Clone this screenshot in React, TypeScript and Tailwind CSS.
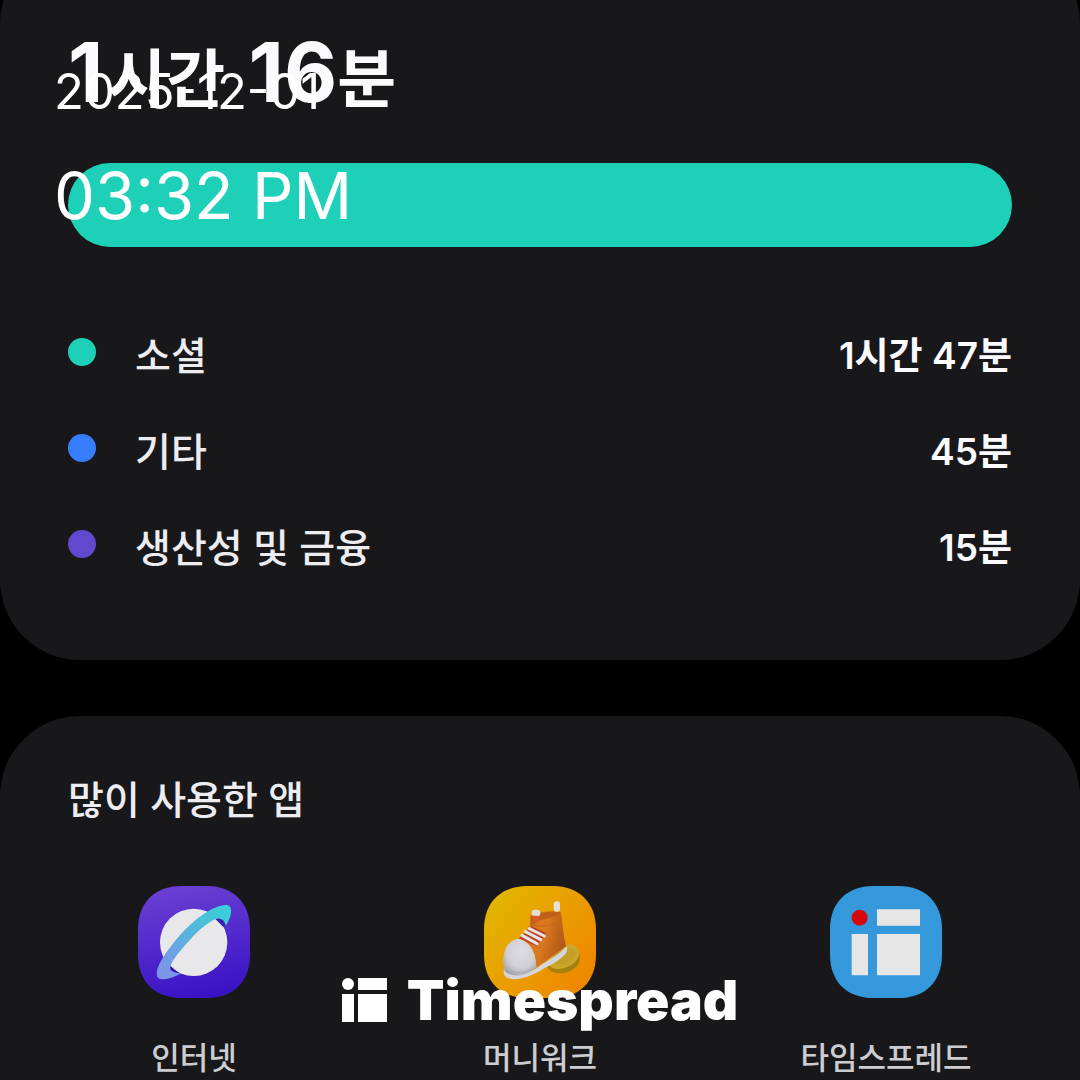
import React from "react";

const SQUIRCLE =
  "M130 0H206C286 0 336 50 336 130V206C336 286 286 336 206 336H130C50 336 0 286 0 206V130C0 50 50 0 130 0Z";

const categories = [
  { name: "소셜", time: "1시간 47분", dot: "bg-[#1fd0b8]" },
  { name: "기타", time: "45분", dot: "bg-[#387dff]" },
  { name: "생산성 및 금융", time: "15분", dot: "bg-[#6049cf]" },
];

function InternetIcon() {
  return (
    <svg viewBox="0 0 336 336" className="size-28" aria-hidden="true">
      <defs>
        <linearGradient id="net-bg" x1="0.4" y1="0" x2="0.6" y2="1">
          <stop offset="0" stopColor="#6a3fd3" />
          <stop offset="1" stopColor="#3912c4" />
        </linearGradient>
        <linearGradient id="net-ring" x1="1" y1="0" x2="0" y2="1">
          <stop offset="0" stopColor="#35d3d8" />
          <stop offset="0.5" stopColor="#5cb2dd" />
          <stop offset="1" stopColor="#818fec" />
        </linearGradient>
      </defs>
      <path d={SQUIRCLE} fill="url(#net-bg)" />
      <circle cx="167" cy="169" r="101" fill="#e8e8ea" />
      <path d="M232 99C244 92 256 98 260 113L263 119L255 122Z" fill="#3a1fae" />
      <path d="M97 239C92 249 95 258 107 262L123 262Z" fill="#3a16ac" />
      <path
        d="M262 57C284 55 286 84 263 120C262 108 254 96 236 98C212 107 184 130 159 158C127 193 102 221 97 242C94 254 106 260 130 262C98 280 68 286 58 273C50 256 66 222 104 174C143 122 213 60 262 57Z"
        fill="url(#net-ring)"
      />
    </svg>
  );
}

function ShoeIcon() {
  return (
    <svg viewBox="0 0 336 336" className="size-28" aria-hidden="true">
      <defs>
        <linearGradient id="shoe-bg" x1="0" y1="0.1" x2="1" y2="0.9">
          <stop offset="0" stopColor="#e2b800" />
          <stop offset="1" stopColor="#f08300" />
        </linearGradient>
        <linearGradient id="shoe-body" x1="0" y1="0" x2="1" y2="0.3">
          <stop offset="0" stopColor="#dc7f22" />
          <stop offset="0.6" stopColor="#d9781c" />
          <stop offset="1" stopColor="#b4591a" />
        </linearGradient>
        <radialGradient id="shoe-toe" cx="0.55" cy="0.35" r="0.75">
          <stop offset="0" stopColor="#dedee2" />
          <stop offset="0.6" stopColor="#cfcfd4" />
          <stop offset="1" stopColor="#9a9aa0" />
        </radialGradient>
        <linearGradient id="shoe-coin" x1="0" y1="0" x2="1" y2="1">
          <stop offset="0" stopColor="#d2aa2a" />
          <stop offset="1" stopColor="#c9a42a" />
        </linearGradient>
      </defs>
      <path d={SQUIRCLE} fill="url(#shoe-bg)" />
      <path d="M188 238C196 264 232 268 260 254C286 242 292 222 286 204L188 226Z" fill="#a5820f" />
      <ellipse cx="238" cy="212" rx="51" ry="33" transform="rotate(-24 238 212)" fill="url(#shoe-coin)" />
      <ellipse cx="240" cy="211" rx="36" ry="21" transform="rotate(-24 240 211)" fill="#c49f25" />
      <path d="M139 91C154 78 205 72 230 79C237 108 236 147 247 180L160 243L105 160C125 143 140 122 139 91Z" fill="url(#shoe-body)" />
      <path d="M139 91C158 79 210 74 230 79C222 93 184 98 163 106L141 123Z" fill="#bf6019" />
      <path d="M141 113C158 125 197 122 233 105" fill="none" stroke="#c46a18" strokeWidth="4" />
      <path d="M104 158L143 121L186 141L158 180Z" fill="#b83e25" />
      <path d="M114 148L159 173M124 137L170 161M136 128L181 150" stroke="#e9e4e2" strokeWidth="9" strokeLinecap="round" />
      <path d="M62 242C86 267 138 264 164 242C194 222 229 205 247 181C251 189 250 197 244 205C220 230 197 237 171 253C138 273 89 290 65 272C58 264 57 253 62 242Z" fill="#d6d6da" />
      <path d="M103 158C134 162 159 200 156 244C132 272 80 276 62 255C50 210 64 164 103 158Z" fill="url(#shoe-toe)" />
      <path d="M61 241C69 262 116 268 154 245" fill="none" stroke="#a9a9af" strokeWidth="3" />
      <rect x="209" y="46" width="19" height="31" rx="9" fill="#e8dfd8" />
      <rect x="143" y="71" width="26" height="20" rx="9" fill="#e5ded8" />
      <path d="M147 89L167 90L164 106L148 109Z" fill="#d65b29" />
    </svg>
  );
}

function TimespreadIcon() {
  return (
    <svg viewBox="0 0 336 336" className="size-28" aria-hidden="true">
      <path d={SQUIRCLE} fill="#3498db" />
      <circle cx="89" cy="95" r="24" fill="#d50707" />
      <path d="M141 70H270V119H141ZM65 144H114V268H65ZM141 144H270V268H141Z" fill="#e6e6e6" />
    </svg>
  );
}

const apps = [
  { name: "인터넷", Icon: InternetIcon },
  { name: "머니워크", Icon: ShoeIcon },
  { name: "타임스프레드", Icon: TimespreadIcon },
];

function Stamp() {
  return (
    <div className="absolute top-0 left-[54px] text-white">
      <p className="mt-16 text-[49px] leading-[56px]">2025-12-01</p>
      <p className="mt-9 text-[65px] leading-[80px]">03:32 PM</p>
    </div>
  );
}

function Brand() {
  return (
    <div className="absolute inset-x-0 top-[968px] flex items-center justify-center gap-5 text-white">
      <svg viewBox="0 0 45 44" className="h-11 w-[45px]" aria-hidden="true">
        <circle cx="6" cy="6" r="6" fill="currentColor" />
        <path d="M16 0H45V12H16ZM0 16H12V44H0ZM16 16H45V44H16Z" fill="currentColor" />
      </svg>
      <span className="text-[55px] leading-[64px] font-black">Timespread</span>
    </div>
  );
}

export default function App() {
  return (
    <main className="relative flex h-screen flex-col gap-14 overflow-hidden bg-black font-['Inter','Noto_Sans_CJK_KR',sans-serif] text-[#ececf1]">
      <section className="-mt-14 shrink-0 rounded-[80px] bg-[#18181a] px-[68px] pt-20 pb-[68px]">
        <h1 className="text-[82px] leading-[98px] font-bold text-[#fafaff]">
          1<span className="mx-1 text-[64px]">시간</span> 16<span className="text-[64px]">분</span>
        </h1>
        <div className="mt-[35px] h-[84px] rounded-full bg-[#1fd0b8]" />
        <ul className="mt-[57px]">
          {categories.map((c) => (
            <li key={c.name} className="flex h-24 items-center">
              <span className={`size-7 rounded-full ${c.dot}`} />
              <span className="mt-2 ml-[39px] text-[39px] leading-[48px] font-medium">{c.name}</span>
              <span className="mt-2 ml-auto text-[37px] leading-[48px] font-semibold text-[#fafaff]">{c.time}</span>
            </li>
          ))}
        </ul>
      </section>

      <section className="flex-1 rounded-t-[80px] bg-[#18181a] pt-[60px]">
        <h2 className="px-[68px] text-[39px] leading-[48px] font-medium">많이 사용한 앱</h2>
        <div className="mt-[62px] grid grid-cols-3 px-[21px]">
          {apps.map(({ name, Icon }) => (
            <button key={name} type="button" className="flex flex-col items-center gap-10">
              <Icon />
              <span className="text-[31px] leading-10 font-medium text-[#cdcdd1]">{name}</span>
            </button>
          ))}
        </div>
      </section>

      <Stamp />
      <Brand />
    </main>
  );
}
